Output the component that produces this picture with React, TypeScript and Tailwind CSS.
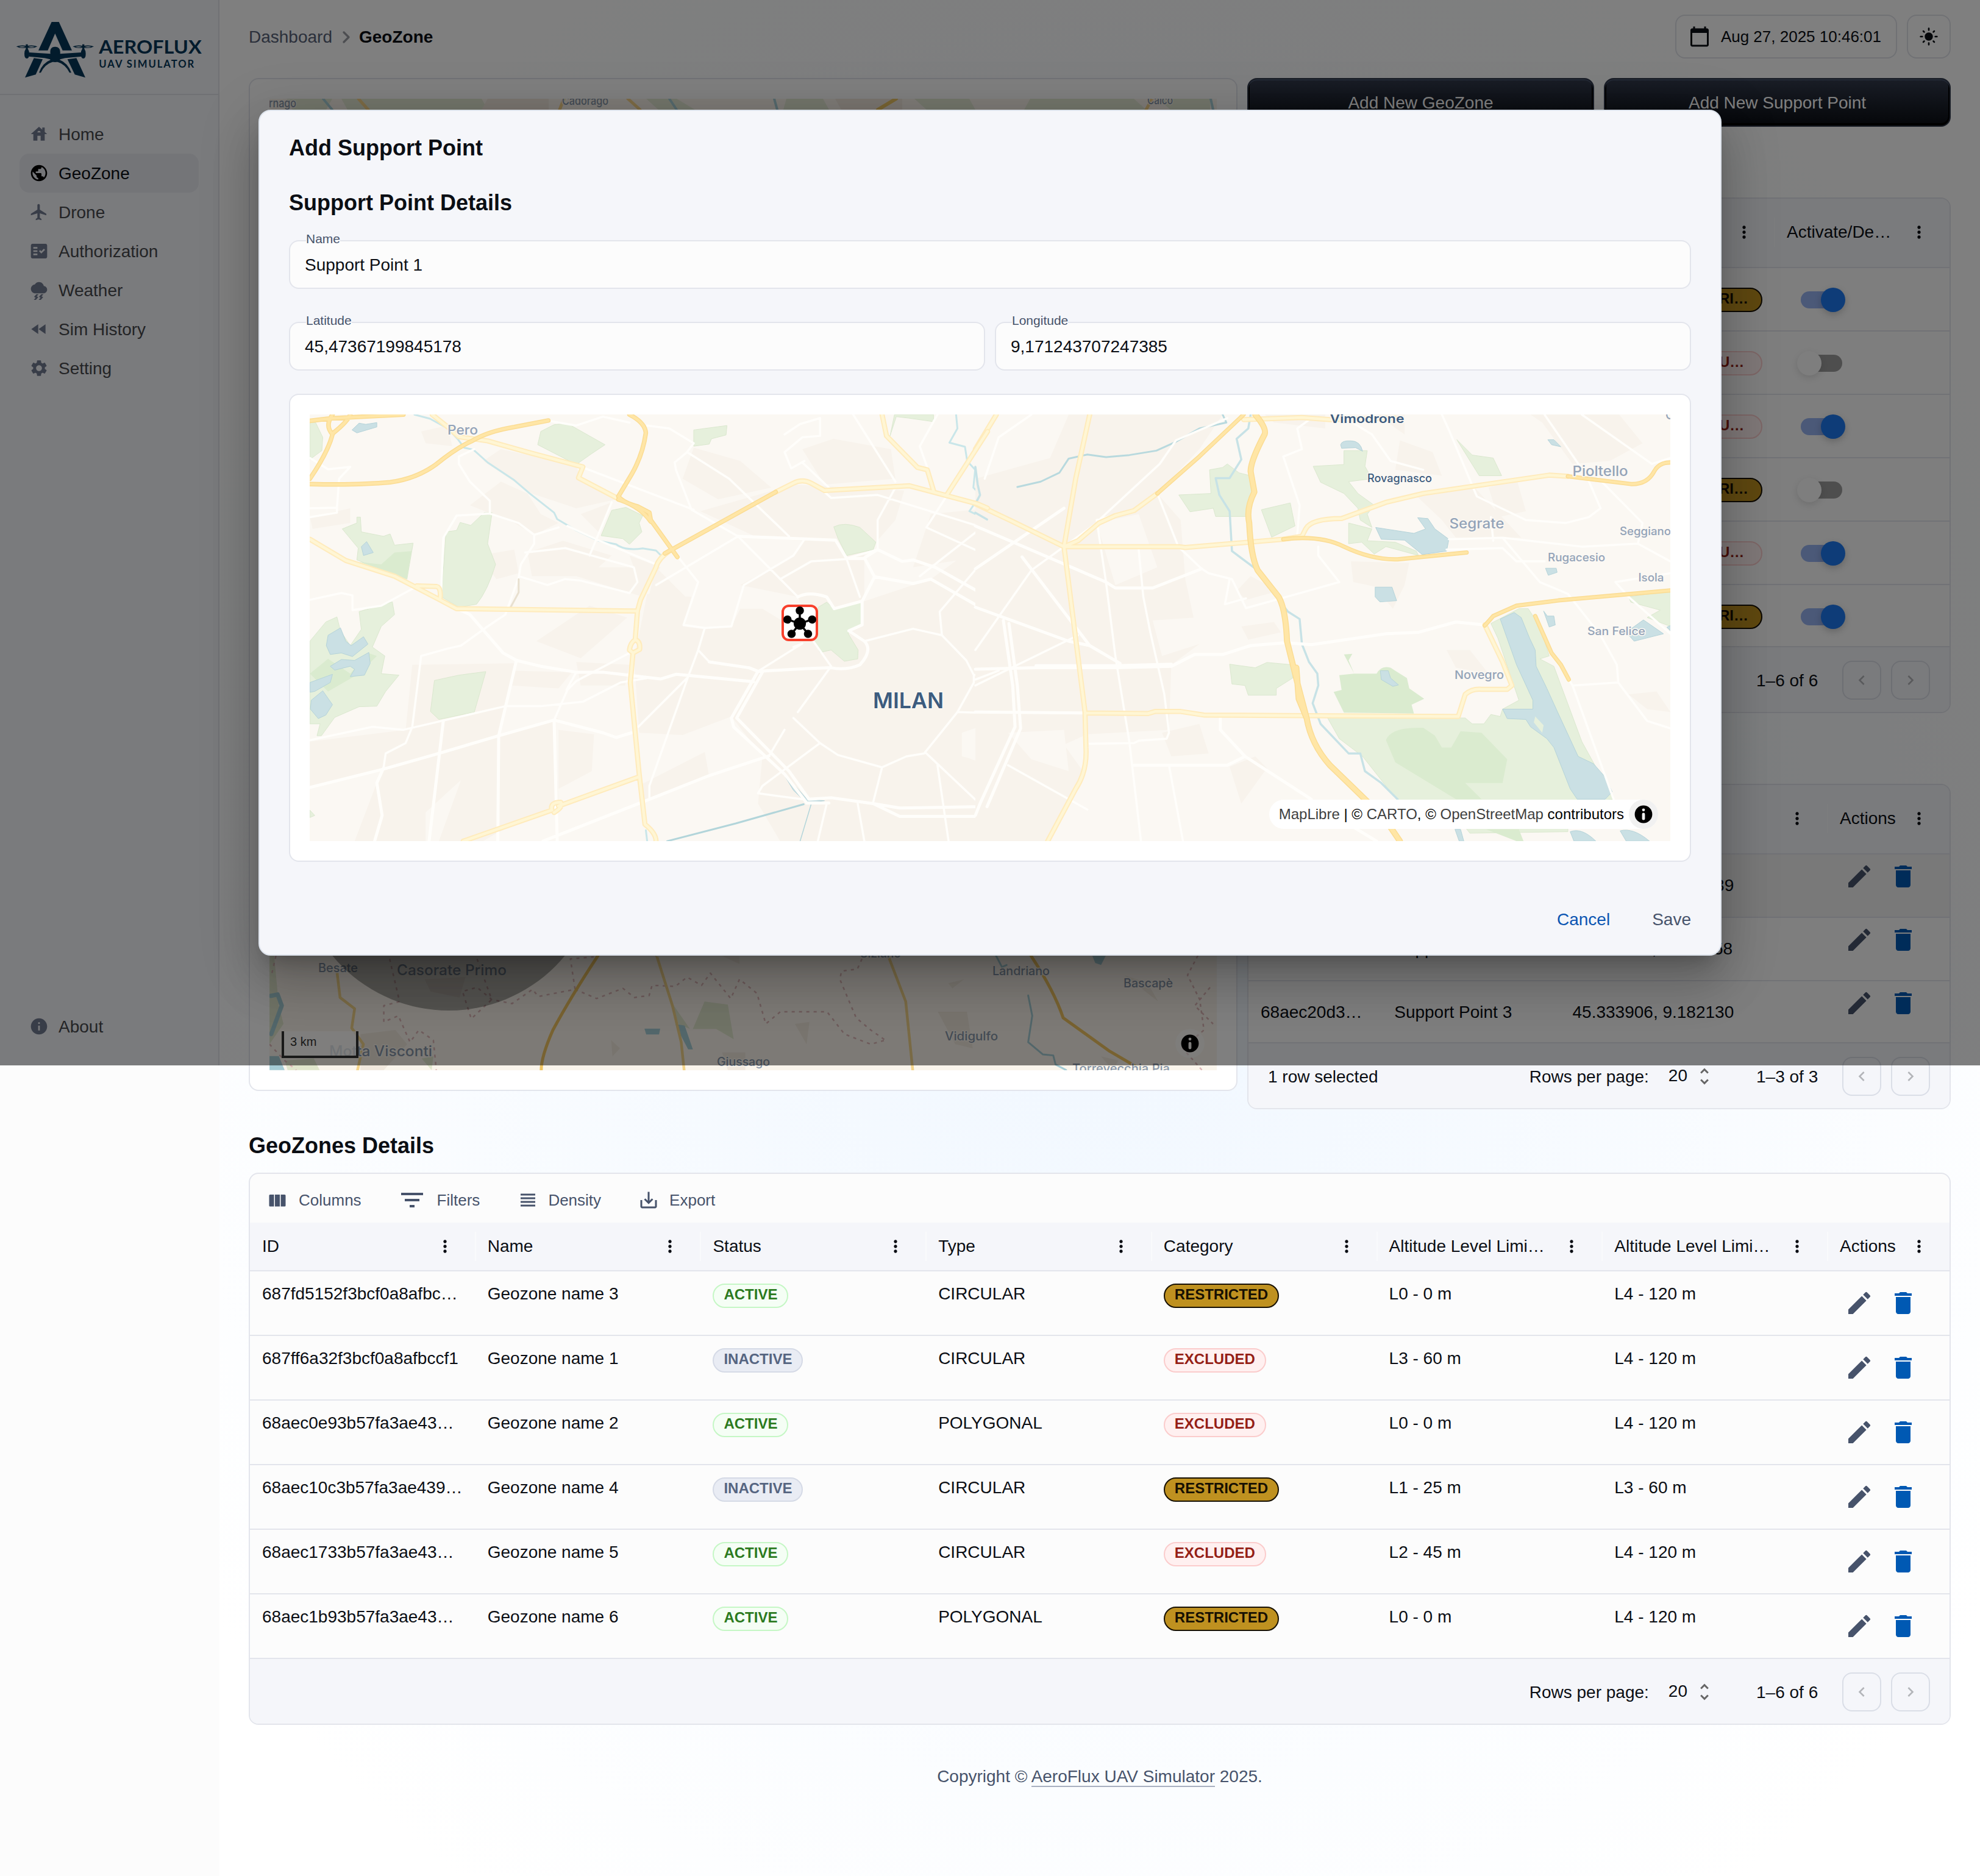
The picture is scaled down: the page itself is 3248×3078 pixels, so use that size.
import type { ComponentType, ReactNode } from "react";
import {
  MdCalendarToday,
  MdDelete,
  MdEdit,
  MdFactCheck,
  MdFastRewind,
  MdFilterList,
  MdFlight,
  MdHouse,
  MdHub,
  MdInfo,
  MdKeyboardArrowLeft,
  MdKeyboardArrowRight,
  MdLightMode,
  MdMoreVert,
  MdPublic,
  MdSaveAlt,
  MdSettings,
  MdThunderstorm,
  MdUnfoldMore,
  MdViewHeadline,
} from "react-icons/md";

type IconType = ComponentType<{ size?: number; className?: string }>;

/* ---------- Sidebar ---------- */

function Logo() {
  return (
    <svg width="350" height="120" viewBox="0 0 1050 360" fill="#053659">
      <path d="M224 48H260L324 188H278L241 105L205 188H159Z" />
      <path d="M112 198L218 205Q213 170 241 170Q269 170 266 205L372 198V218L290 226L266 232Q260 246 241 246Q222 246 216 232L190 226L112 218Z" />
      {[102, 380].map((x) => (
        <g key={x} transform={`translate(${x} 0)`}>
          <path d="M-5 158H5V180Q12 190 12 204Q12 228 0 228Q-12 228 -12 204Q-12 190 -5 180Z" />
          <path d="M-52 169Q-30 160 0 166Q30 160 52 169Q30 181 0 174Q-30 181 -52 169ZM-40 170Q-22 176 -6 171Q-22 165 -40 170ZM40 170Q22 176 6 171Q22 165 40 170Z" fillRule="evenodd" />
        </g>
      ))}
      <path d="M137 226L180 232L146 307L93 322Z" />
      <path d="M346 226L302 232L338 307L390 322Z" />
      <path d="M162 298Q178 250 220 234L232 244Q190 256 171 298Z" />
      <path d="M321 298Q304 250 263 234L250 244Q292 256 312 298Z" />
      <text x="457" y="205" fontSize="92" fontWeight="700" fontFamily="Lato, sans-serif" textLength="505" lengthAdjust="spacingAndGlyphs">AEROFLUX</text>
      <text x="457" y="272" fontSize="50" fontWeight="700" fontFamily="Lato, sans-serif" textLength="468" lengthAdjust="spacing">UAV SIMULATOR</text>
    </svg>
  );
}

function NavItem({ icon: Icon, label, active }: { icon: IconType; label: string; active?: boolean }) {
  return (
    <div className={active ? "flex h-16 items-center gap-4 rounded-2xl bg-[#e8eaf1] px-4 text-[#0b0e14]" : "flex h-16 items-center gap-4 px-4 text-[#47484d]"}>
      <Icon size={32} className={active ? "text-black" : "text-[#717a90]"} />
      <span className="pt-0.5 text-[28px] leading-none">{label}</span>
    </div>
  );
}

function Sidebar() {
  return (
    <aside className="w-[360px] shrink-0 bg-[#fcfcfc]">
      <div className="flex h-[1748px] flex-col border-r-2 border-[#e0e2e9] bg-[#f5f6fa]">
        <div className="h-[156px] border-b-2 border-[#e0e2e9] pt-5 pl-2.5">
          <Logo />
        </div>
        <nav className="flex flex-1 flex-col p-8">
          <NavItem icon={MdHouse} label="Home" />
          <NavItem icon={MdPublic} label="GeoZone" active />
          <NavItem icon={MdFlight} label="Drone" />
          <NavItem icon={MdFactCheck} label="Authorization" />
          <NavItem icon={MdThunderstorm} label="Weather" />
          <NavItem icon={MdFastRewind} label="Sim History" />
          <NavItem icon={MdSettings} label="Setting" />
          <div className="mt-auto">
            <NavItem icon={MdInfo} label="About" />
          </div>
        </nav>
      </div>
    </aside>
  );
}

/* ---------- Shared pieces ---------- */

type Tone = "active" | "inactive" | "restricted" | "excluded";

const chipTone: Record<Tone, string> = {
  active: "border-[#c5f7c5] bg-[#f5fef5] text-[#2c7a1e]",
  inactive: "border-[#d5dae6] bg-[#e9ecf4] text-[#566581]",
  restricted: "border-[#171002] bg-[#bf9120] text-[#171002]",
  excluded: "border-[#fbcccc] bg-[#fff0f0] text-[#951f16]",
};

function Chip({ tone, children, className = "" }: { tone: Tone; children: ReactNode; className?: string }) {
  return (
    <span className={`inline-flex h-10 items-center rounded-full border-2 px-4 pb-1 text-[24px] leading-none font-bold ${chipTone[tone]} ${className}`}>
      {children}
    </span>
  );
}

function HeaderCell({ children, last }: { children?: ReactNode; last?: boolean }) {
  return (
    <div className="relative flex h-full items-center justify-between pr-[34px] pl-5 text-[28px] leading-none whitespace-nowrap text-[#0b0e14]">
      <span>{children}</span>
      <MdMoreVert size={32} />
      {!last && <span className="absolute top-1/2 -right-px h-12 w-0.5 -translate-y-1/2 bg-[#f9fafc]" />}
    </div>
  );
}

function RowActions() {
  return (
    <div className="flex gap-6 pl-7">
      <MdEdit size={48} className="text-[#47536b]" />
      <MdDelete size={48} className="text-[#0059b3]" />
    </div>
  );
}

function Pagination({ range, selected }: { range: string; selected?: string }) {
  return (
    <div className="flex h-[106px] items-center bg-[#f5f6fa] px-8 pt-0.5 text-[28px] leading-none text-[#0b0e14]">
      <span className="flex-1 pt-0.5">{selected}</span>
      <span className="pt-0.5">Rows per page:</span>
      <span className="ml-8 pb-0.5">20</span>
      <MdUnfoldMore size={36} className="ml-[10px] text-[#666]" />
      <span className="ml-[67px] w-[101px] pt-0.5 whitespace-nowrap">{range}</span>
      <span className="ml-10 flex size-16 items-center justify-center rounded-2xl border-2 border-[#dadee7] text-[#b3b5b9]">
        <MdKeyboardArrowLeft size={32} />
      </span>
      <span className="ml-4 flex size-16 items-center justify-center rounded-2xl border-2 border-[#dadee7] text-[#b3b5b9]">
        <MdKeyboardArrowRight size={32} />
      </span>
    </div>
  );
}

function InfoGlyph() {
  return (
    <svg width="48" height="48" viewBox="0 0 20 20" fill="#000" fillRule="evenodd">
      <path d="M4 10a6 6 0 1 0 12 0 6 6 0 1 0-12 0m5-3a1 1 0 1 0 2 0 1 1 0 1 0-2 0m0 3a1 1 0 1 1 2 0v3a1 1 0 1 1-2 0" />
    </svg>
  );
}

interface Place {
  t: string;
  x: number;
  y: number;
  w: number;
  s: number;
  c: string;
  b?: number;
}

function Places({ items, halo }: { items: Place[]; halo: string }) {
  return (
    <g fontFamily="Inter, sans-serif" stroke={halo} strokeWidth="3" paintOrder="stroke" strokeLinejoin="round">
      {items.map((p) => (
        <text key={p.t} x={p.x} y={p.y} fontSize={p.s} fill={p.c} fontWeight={p.b ?? 500} textLength={p.w} lengthAdjust="spacingAndGlyphs">
          {p.t}
        </text>
      ))}
    </g>
  );
}

function Lines({ d, color, w, dash }: { d: string; color: string; w: number; dash?: string }) {
  return <path d={d} fill="none" stroke={color} strokeWidth={w} strokeDasharray={dash} strokeLinejoin="round" strokeLinecap={dash ? "butt" : "round"} vectorEffect="non-scaling-stroke" />;
}

/* ---------- Overview map ---------- */

const overviewPlaces: Place[] = [
  { t: "rnago", x: 441, y: 176, w: 45, s: 20, c: "#8695a8" },
  { t: "Cadorago", x: 922, y: 172, w: 76, s: 19, c: "#8695a8" },
  { t: "Calco", x: 1882, y: 171, w: 42, s: 19, c: "#8695a8" },
  { t: "Besate", x: 522, y: 1595, w: 65, s: 20, c: "#8695a8" },
  { t: "Casorate Primo", x: 651, y: 1600, w: 180, s: 24, c: "#8695a8" },
  { t: "Motta Visconti", x: 540, y: 1733, w: 169, s: 24, c: "#8695a8" },
  { t: "Giussago", x: 1176, y: 1749, w: 87, s: 20, c: "#8695a8" },
  { t: "Vidigulfo", x: 1550, y: 1707, w: 87, s: 20, c: "#8695a8" },
  { t: "Landriano", x: 1628, y: 1600, w: 94, s: 20, c: "#8695a8" },
  { t: "Bascapè", x: 1843, y: 1620, w: 81, s: 20, c: "#8695a8" },
  { t: "Casarile", x: 1043, y: 1568, w: 70, s: 19, c: "#8695a8" },
  { t: "Siziano", x: 1411, y: 1571, w: 67, s: 19, c: "#8695a8" },
  { t: "Torrevecchia Pia", x: 1759, y: 1760, w: 160, s: 20, c: "#8695a8" },
];

function OverviewMap() {
  return (
    <div className="relative h-full">
      <svg className="block" width="1554" height="1594" viewBox="442 162 1554 1594">
        <rect x="442" y="162" width="1554" height="1594" fill="#faf5ec" />
        <path fill="#e4ead5" d="M470 162H545L535 180H480ZM560 162H640L650 180H570ZM630 162H790L800 180H610ZM1060 162H1110L1140 180H1080ZM1290 162H1350L1360 180H1285ZM1500 162H1590L1600 180H1520ZM1690 162H1860L1880 180H1680ZM1900 162H1985V180H1920Z" />
        <path fill="#f2e9df" d="M800 162H900V180H790ZM1370 162H1480V180H1380Z" />
        <Lines d="M588 162L604 180M925 162L918 180M1030 162L1050 180M1880 180L1890 162" color="#f8d58a" w={5} />
        <Lines d="M1470 162L1440 180" color="#efc665" w={6} />
        <Lines d="M530 162L545 180M1098 162L1110 180M1270 162L1275 180M1986 162L1990 180" color="#a9d0d9" w={4} />
        <g transform="translate(400 1360) scale(.9566 .3333)">
          <path fill="#e0e6cc" d="M790 850L830 865L840 1035L810 985L770 985ZM735 860L765 985L745 960ZM44 625H52L60 870L68 960L44 1060ZM70 1140L120 1130L130 1187H75ZM305 1130L325 1120L322 1187Z" />
          <path fill="#f1e8dd" d="M200 1010L260 990L280 1060L240 1187H200ZM1190 900L1240 900L1250 1080L1220 1060ZM310 740L380 730L370 830L320 800ZM820 1100H860V1187H830ZM945 960L970 950L965 1060ZM630 1040L645 1080L632 1120ZM1510 720L1550 760L1568 850ZM1208 760L1235 740L1215 785ZM820 625H850V665ZM1470 1120L1500 1140L1490 1187Z" />
          <path fill="#a5ccd5" d="M687 983H714L712 1012H690ZM740 960L756 968L770 1085H762L750 1020ZM1455 625H1478L1470 670L1460 660ZM44 1118H60L70 1187H44Z" />
          <Lines d="M46 822L58 815L65 870L47 1010" color="#a5ccd5" w={7} />
          <Lines d="M1290 625L1300 680L1308 670M1345 820L1352 920L1345 1050L1370 1110L1388 1115L1392 1160L1410 1187" color="#a5ccd5" w={3} />
          <Lines
            d="M55 625L47 725M44 1060L70 1140L90 1187M250 640L267 850L240 870V950L265 920L285 1050L300 990L325 1040L330 1187M400 640L425 840L390 935L375 800L400 780L425 840L460 860L495 790L505 825L568 790L560 640L600 630M568 790L605 835L650 785L670 830L695 820L700 770L740 775L760 730L785 770L800 710L835 835L850 740L880 810L895 960L920 900L1000 900L1030 1010L1075 1060L1100 1040M1060 640L1052 690L1025 700L1022 740L1050 930L1075 990L1100 1040M1830 700L1860 780L1855 940M1850 1000L1870 1187"
            color="#dcb6b7"
            w={2.5}
            dash="5 7"
          />
          <Lines d="M708 625L735 870L750 1050L755 1187M1105 625L1135 850L1147 1187M160 710L165 830L190 885L185 980L205 1060L195 1187" color="#f3d48b" w={4.5} />
          <Lines d="M607 625Q560 830 530 990Q510 1120 510 1187M1350 625Q1390 800 1405 930L1485 1095L1540 1187" color="#f0c562" w={5} />
        </g>
        <Lines d="M1965 1568L1948 1600L1968 1640L1975 1690L1940 1720L1972 1756M1985 1620L1960 1650L1990 1680" color="#dcb6b7" w={2.5} dash="5 6" />
        <Places items={overviewPlaces} halo="#faf5ec" />
        <circle cx="736" cy="1411" r="247" fill="#000" fillOpacity=".33" />
      </svg>
      <div className="absolute bottom-5 left-5 h-11 w-[126px] border-4 border-t-0 border-[#333] bg-white/75 pt-[7px] pl-2.5 text-[20px] leading-5 text-[#333]">3 km</div>
      <div className="absolute right-5 bottom-5 rounded-full bg-white/50">
        <InfoGlyph />
      </div>
    </div>
  );
}

/* ---------- Summary tables in the right column ---------- */

const zoneToggles: { name: string; tone: Tone; label: string; on: boolean }[] = [
  { name: "Geozone name 3", tone: "restricted", label: "RESTRI…", on: true },
  { name: "Geozone name 1", tone: "excluded", label: "EXCLU…", on: false },
  { name: "Geozone name 2", tone: "excluded", label: "EXCLU…", on: true },
  { name: "Geozone name 4", tone: "restricted", label: "RESTRI…", on: false },
  { name: "Geozone name 5", tone: "excluded", label: "EXCLU…", on: true },
  { name: "Geozone name 6", tone: "restricted", label: "RESTRI…", on: true },
];

function Toggle({ on }: { on: boolean }) {
  return (
    <div className={on ? "relative ml-[23px] h-7 w-[68px] rounded-full bg-[#96b2f0]" : "relative ml-[23px] h-7 w-[68px] rounded-full bg-[#9c9c9c]"}>
      <span
        className={
          on
            ? "absolute -top-1.5 -right-[5px] size-10 rounded-full bg-[#1c78f0] shadow-[0_4px_12px_rgba(0,0,0,0.2)]"
            : "absolute -top-1.5 -left-1.5 size-10 rounded-full bg-[#fcfcfc] shadow-[0_4px_12px_rgba(0,0,0,0.12)]"
        }
      />
    </div>
  );
}

function ZoneToggleTable() {
  return (
    <section className="mt-[116px] overflow-hidden rounded-2xl border-2 border-[#e3e5ec] bg-[#fcfcfc]">
      <div className="grid h-[114px] grid-cols-[1fr_193px_287px] border-b-2 border-[#e3e5ec] bg-[#f5f6fa] pb-0.5">
        <HeaderCell>Name</HeaderCell>
        <HeaderCell>Type</HeaderCell>
        <HeaderCell last>Activate/De…</HeaderCell>
      </div>
      {zoneToggles.map((z, i) => (
        <div key={z.name} className={`grid grid-cols-[1fr_193px_287px] items-start border-b-2 border-[#e3e5ec] pt-8 text-[28px] ${i === 5 ? "h-[102px]" : "h-[104px]"}`}>
          <span className="pl-5 leading-10">{z.name}</span>
          <div className="flex px-5">
            <Chip tone={z.tone} className="w-full">{z.label}</Chip>
          </div>
          <div className="pt-1.5 pl-5">
            <Toggle on={z.on} />
          </div>
        </div>
      ))}
      <Pagination range="1–6 of 6" />
    </section>
  );
}

const supportPoints = [
  { id: "68aec1f13…", name: "Support Point 1", pos: "45.473672, 9.171239" },
  { id: "68aec2003…", name: "Support Point 2", pos: "45.402118, 9.204758" },
  { id: "68aec20d3…", name: "Support Point 3", pos: "45.333906, 9.182130" },
];

function SupportPointTable() {
  return (
    <section className="mt-[116px] overflow-hidden rounded-2xl border-2 border-[#e3e5ec] bg-[#fcfcfc]">
      <div className="grid h-[114px] grid-cols-[1.5fr_2fr_3fr_200px] border-b-2 border-[#e3e5ec] bg-[#f5f6fa] pb-0.5">
        <HeaderCell>ID</HeaderCell>
        <HeaderCell>Name</HeaderCell>
        <HeaderCell>Position</HeaderCell>
        <HeaderCell last>Actions</HeaderCell>
      </div>
      {supportPoints.map((p, i) => (
        <div
          key={p.id}
          className={`grid grid-cols-[1.5fr_2fr_3fr_200px] border-b-2 border-[#e3e5ec] pt-3 text-[28px] leading-[78px] whitespace-nowrap text-[#0b0e14] ${i === 0 ? "bg-[#f2f2f3]" : ""} ${i === 2 ? "h-[102px]" : "h-[104px]"}`}
        >
          <span className="pl-5">{p.id}</span>
          <span className="pl-5">{p.name}</span>
          <span className="pl-5">{p.pos}</span>
          <RowActions />
        </div>
      ))}
      <Pagination range="1–3 of 3" selected="1 row selected" />
    </section>
  );
}

/* ---------- GeoZones details table ---------- */

const zones: { id: string; name: string; on: boolean; type: string; restricted: boolean; low: string; high: string }[] = [
  { id: "687fd5152f3bcf0a8afbc…", name: "Geozone name 3", on: true, type: "CIRCULAR", restricted: true, low: "L0 - 0 m", high: "L4 - 120 m" },
  { id: "687ff6a32f3bcf0a8afbccf1", name: "Geozone name 1", on: false, type: "CIRCULAR", restricted: false, low: "L3 - 60 m", high: "L4 - 120 m" },
  { id: "68aec0e93b57fa3ae43…", name: "Geozone name 2", on: true, type: "POLYGONAL", restricted: false, low: "L0 - 0 m", high: "L4 - 120 m" },
  { id: "68aec10c3b57fa3ae439…", name: "Geozone name 4", on: false, type: "CIRCULAR", restricted: true, low: "L1 - 25 m", high: "L3 - 60 m" },
  { id: "68aec1733b57fa3ae43…", name: "Geozone name 5", on: true, type: "CIRCULAR", restricted: false, low: "L2 - 45 m", high: "L4 - 120 m" },
  { id: "68aec1b93b57fa3ae43…", name: "Geozone name 6", on: true, type: "POLYGONAL", restricted: true, low: "L0 - 0 m", high: "L4 - 120 m" },
];

function ColumnsIcon() {
  return (
    <svg width="36" height="36" viewBox="0 0 24 24" fill="currentColor">
      <path d="M14.67 6v13H9.33V6zm1 13H20q1 0 1-1V7q0-1-1-1h-4.33zm-7.34 0V6H4Q3 6 3 7v11q0 1 1 1z" />
    </svg>
  );
}

function ZoneDetails() {
  return (
    <section>
      <h2 className="mt-9 h-12 text-[36px] leading-12 font-bold text-[#0b0e14]">GeoZones Details</h2>
      <div className="mt-5 overflow-hidden rounded-2xl border-2 border-[#e3e5ec] bg-[#fcfcfc]">
        <div className="flex h-20 items-center pt-1.5 pl-[27px] text-[26px] leading-none text-[#47536b]">
          <ColumnsIcon />
          <span className="ml-[17px]">Columns</span>
          <MdFilterList size={48} className="ml-[59px]" />
          <span className="ml-[17px]">Filters</span>
          <MdViewHeadline size={36} className="ml-[61px]" />
          <span className="ml-[15px]">Density</span>
          <MdSaveAlt size={36} className="ml-[60px]" />
          <span className="ml-4">Export</span>
        </div>
        <div className="grid h-20 grid-cols-[repeat(7,1fr)_200px] border-b-2 border-[#e3e5ec] bg-[#f5f6fa]">
          {["ID", "Name", "Status", "Type", "Category", "Altitude Level Limi…", "Altitude Level Limi…", "Actions"].map((h, i) => (
            <HeaderCell key={i} last={i === 7}>{h}</HeaderCell>
          ))}
        </div>
        {zones.map((z) => (
          <div key={z.id} className="grid h-[106px] grid-cols-[repeat(7,1fr)_200px] items-start border-b-2 border-[#e3e5ec] text-[28px] leading-[40px] whitespace-nowrap text-[#0b0e14]">
            <span className="pt-[17px] pl-5">{z.id}</span>
            <span className="pt-[17px] pl-5">{z.name}</span>
            <div className="flex pt-5 pl-5">
              <Chip tone={z.on ? "active" : "inactive"}>{z.on ? "ACTIVE" : "INACTIVE"}</Chip>
            </div>
            <span className="pt-[17px] pl-5">{z.type}</span>
            <div className="flex pt-5 pl-5">
              <Chip tone={z.restricted ? "restricted" : "excluded"}>{z.restricted ? "RESTRICTED" : "EXCLUDED"}</Chip>
            </div>
            <span className="pt-[17px] pl-5">{z.low}</span>
            <span className="pt-[17px] pl-5">{z.high}</span>
            <div className="pt-7">
              <RowActions />
            </div>
          </div>
        ))}
        <Pagination range="1–6 of 6" />
      </div>
    </section>
  );
}

/* ---------- City map in the dialog ---------- */

const cityPlaces: Place[] = [
  { t: "Pero", x: 734, y: 712.5, w: 50, s: 22, c: "#93a3b8" },
  { t: "Vimodrone", x: 2181.5, y: 694, w: 122, s: 20, c: "#3d5c7f", b: 600 },
  { t: "Rovagnasco", x: 2243, y: 790.5, w: 106, s: 18, c: "#3d5c7f" },
  { t: "Pioltello", x: 2579.5, y: 781, w: 91, s: 23, c: "#93a3b8" },
  { t: "Segrate", x: 2377.5, y: 867, w: 90, s: 23, c: "#93a3b8" },
  { t: "Seggiano", x: 2657, y: 877.5, w: 84, s: 18, c: "#93a3b8" },
  { t: "Rugacesio", x: 2539, y: 920.5, w: 94, s: 18, c: "#93a3b8" },
  { t: "Isola", x: 2687.5, y: 954, w: 42, s: 18, c: "#93a3b8" },
  { t: "San Felice", x: 2604, y: 1042, w: 95, s: 18, c: "#93a3b8" },
  { t: "Novegro", x: 2386, y: 1113.5, w: 81, s: 19, c: "#93a3b8" },
  { t: "C", x: 2732, y: 688, w: 14, s: 22, c: "#93a3b8" },
  { t: "MILAN", x: 1432, y: 1161.5, w: 116, s: 36, c: "#3d5c7f", b: 600 },
];

const westLocal =
  "M39 1345L200 1285L330 1230L465 1170L590 1117L700 1160L730 1176L765 1160M372 740L400 760L475 890L505 915L560 935L640 955H700L830 978L865 962L1040 987M505 915L465 1170L463 1527M590 1117L597 1527M340 1120L308 1527M205 1280L190 1330L202 1440L185 1527M565 1527L780 1400L940 1305L1075 1238M1050 952L990 1110L995 1140L1110 1300L1160 1398H1210M1060 955L1002 1110L1120 1290L1165 1385L1215 1380L1310 1400L1370 1415L1550 1410L1568 1380M1310 1400L1370 1443H1550L1568 1420M940 920L1030 940L1050 952L1160 943L1215 940Q1250 950 1280 930Q1310 880 1290 850L1255 815L1285 795V715L1313 632L1290 568L1320 540L1375 580L1400 575L1450 600L1568 700M1140 700Q1165 680 1205 700L1222 740L1283 715M1313 632L1400 655L1440 640L1568 750M1005 495L1225 508L1250 570H1290";
const westMinor =
  "M39 1185L180 1140L250 1150L480 1070H560L655 1055L740 990L800 975M205 1280L210 1230L255 1195L270 1140L290 900L350 875L380 865L440 800L480 760L510 635L515 590L545 520V490L510 450L445 418V375L400 310L375 250V225L410 200M760 890L640 985L620 1015L590 1117M640 955L618 1015M890 975L780 1140M930 805L915 880L890 980L805 1340V1380M915 880L940 920M1430 1230L1550 1400M1425 1230L1500 1090L1537 990V965L1520 915L1465 830L1460 750L1568 560M1425 1230L1385 1240L1330 1277L1230 1235L1190 1195L1130 1110M1330 1277L1310 1395M1190 1195L1060 1340L1050 1365L1150 1385M1500 1090L1568 1093M1537 965L1568 960M1290 850L1400 808L1465 830M1050 952L1150 858L1130 870M1175 850L1215 935L1140 1090M1005 495L820 660M1005 495L900 405L865 270L862 245L890 210L905 180L850 130L800 120M905 405L660 265M890 210L985 300L1120 495M720 380L670 560M525 550L615 535L770 600L778 650L760 687L650 645L615 640L575 660L515 632M870 565L915 650L882 795L930 805L990 800L1018 660L1130 560L1155 505M1005 495L1140 700M1100 640L1170 580L1250 572L1280 700M1265 83L1360 310M1455 83L1415 190L1432 262M1200 345L1215 365L1320 355L1568 470M1475 360L1430 465L1568 560M1415 630L1568 450M1320 540V440L1360 330M600 465L545 490M685 505L620 460M685 505L820 590M39 400L100 398L105 300L130 260L80 268L39 230M39 430L100 415V398M39 710L110 687L135 695V745L200 730L280 665M575 103L640 120L700 90L760 110M1110 150L1145 115L1190 95V155L1150 160L1110 210L1125 265L1155 240M370 425L445 418M370 425L340 500L335 690M1150 245L1210 330M1455 1270L1480 1527M1275 1400L1290 1527M1205 1400L1185 1527M200 1285L39 1345M1075 1238L1110 1150M1320 540L1250 570";
const eastLocal =
  "M0 460L280 650L300 670H380L485 605M100 565L245 865L310 925M0 735L200 850L245 865M0 605L190 400M60 780L80 1000L85 1140L10 1400L0 1440M72 790L90 1000L97 1145L25 1410M130 940H300L420 935L470 895L530 895L590 865L665 855L720 862L880 825L950 820L1030 785L1090 795M130 933H300L420 928M0 945L130 940M0 1090L235 1093M340 1270H540L578 1240L525 1150V1110M578 1240L720 1385M860 1527L780 1450L730 1395";
const eastMinor =
  "M280 650L260 440L295 425M265 440L395 250L430 170L540 95M280 650L300 900L330 1190L355 1527M245 1197L340 1195L350 1187L410 1180L415 1160L405 1030L375 820L360 700L350 540M415 1270L445 1527M390 350L410 430L435 530L485 605M660 225L700 200L690 130L720 95M660 225L695 390L690 490M735 530V560L780 650L690 690L580 738L550 640L500 620L485 605M545 640L535 725L580 705M1015 505L1130 500L1300 530L1420 520L1490 580M1010 540L1130 535L1160 580H1220M1220 83L1310 290L1340 400L1315 430L1265 450L1225 445L1180 440L1075 360L1015 135L1000 83M1130 500L1210 650L1270 690L1340 830L1375 930L1378 990L1280 1000L1272 980M1280 1000L1368 1385M1378 990L1440 1120L1490 1145M1400 700L1490 825M1372 650L1490 620M1372 650L1400 700M0 980L50 950M120 83L50 160L20 300M0 880L120 610L260 450M70 1270L240 1420M780 83L850 150L890 240L960 270M1300 83L1450 250L1490 230M1105 430L1110 510M1330 290L1430 450L1420 520M220 830L0 1000";

function CityMap() {
  return (
    <div className="relative h-full">
      <svg className="block" width="2232" height="700" viewBox="508 680 2232 700">
        <rect x="508" y="680" width="2232" height="700" fill="#fbf8f3" />
        <g transform="translate(480 640) scale(.72704 .48469)">
          <path
            fill="#f8f3ec"
            d="M820 600L900 720L880 800L930 810L990 800L1010 740L1060 740L1180 850L1140 700L1010 660L1130 560L1150 510L1050 500L920 410L1060 350L1130 320L1380 340L1360 440L1290 560L1290 715L1440 640L1568 500V1130L1510 1160L1510 1240L1568 1260V1527H1100L1050 1400L1060 1240L990 1105L880 1168L782 1160L770 900ZM470 200L640 255L650 300L730 370L640 400L540 350L430 240ZM400 390L500 450L545 490L600 450L560 420L530 350L470 310ZM530 550L610 510L720 560L690 600L770 600L760 560L830 600L790 700L640 630H540ZM270 930L500 925L465 1170L590 1115L600 1400L460 1500L430 1527H140L200 1290L39 1345V1190L255 1150ZM500 950L630 955L600 1010L495 1000ZM550 850L670 730L755 770L650 908ZM640 920L760 930L750 1000L650 1000ZM520 1160L600 1110L570 1180ZM780 1340L930 1225L940 1310L790 1390ZM600 1150L680 1165L675 1290L600 1350ZM1150 200L1220 165L1350 200L1360 300L1200 320ZM905 195L1010 240L1080 330L960 370L880 300ZM1420 200L1480 110L1530 180L1500 290L1440 240ZM560 290L640 300L650 370L570 360ZM290 140L350 120L360 190L300 180ZM39 430L130 400V450L45 470ZM800 690L900 700L880 800L780 840ZM420 560L500 540L510 620L460 640ZM1440 420L1568 400V560L1400 600ZM1240 1527V1420L1300 1400L1310 1527ZM650 420L720 380L690 480Z"
          />
          <path fill="#fbf8f3" d="M1350 83H1568V140L1475 350L1430 320L1400 230L1345 170ZM685 1270L720 1265L715 1310L690 1325ZM1510 1170L1568 1150V1270L1515 1240ZM300 1430L380 1320L330 1527H300Z" />
          <path
            fill="#e6f0dc"
            stroke="#dbe8cf"
            strokeWidth="1"
            vectorEffect="non-scaling-stroke"
            d="M560 140L590 117L620 113L705 185L675 215L640 252L553 185ZM905 135L980 120L978 152L945 165L940 183L905 190ZM1358 83H1446V107L1390 95L1362 90L1348 155ZM39 108L52 110L68 160L66 205L39 235ZM720 407L752 397L790 425L782 450L788 480L760 522L745 503L696 493ZM112 470L145 450L145 430L153 430L155 480L205 495L220 487L230 525L272 518L258 640L145 575L148 535ZM346 480L370 475L378 448L402 458L432 415H450L440 520L458 590Q440 680 415 725L375 735L336 700ZM1221 463Q1245 445 1280 465L1316 515L1310 540L1250 560L1230 500ZM1283 715V795L1253 823L1276 880L1275 910L1245 918L1215 880L1190 888L1176 850L1186 735L1205 718L1222 740ZM39 850L75 785L100 768L108 815L130 865L155 810L150 750L225 717L230 760L200 800L180 870L208 900L200 960L240 965L210 1020L190 1070L150 1072L95 1108L65 1170H55L62 1130L39 1130ZM320 983L375 965L436 953L410 1090L330 1115L311 1088ZM39 1422L50 1440L39 1447Z"
          />
          <path fill="#daebcf" d="M230 550L268 545L258 640L150 582L200 590ZM39 960L80 910L130 960L170 890L190 900L150 960L80 1020Z" />
          <path
            fill="#cae0e4"
            stroke="#b5d3d9"
            strokeWidth="1"
            vectorEffect="non-scaling-stroke"
            d="M80 830L108 805L120 850L132 865L160 835L170 860L135 902L110 890L85 895L76 865ZM85 935L110 912L140 915L172 888L175 925L162 965L130 970L140 945L130 935L95 948ZM39 990L90 962L85 990L50 1020L39 1023ZM42 1050L68 1018L90 1065L75 1100L58 1112L40 1080ZM134 135L150 112L165 116L190 110V125L145 145ZM155 530L167 513L182 550L160 560ZM1112 1310L1140 1350L1160 1384L1200 1390L1160 1398L1130 1355Z"
          />
          <Lines d="M275 83L310 97L350 130L372 165L387 195L408 202L440 245L500 305L535 350L590 415L597 437L640 475L690 510L730 522Q750 545 790 536L820 543L830 558M1497 83L1500 130L1482 178L1517 192L1522 240L1540 270L1536 330L1552 355L1527 410L1568 440M797 1490L800 1527" color="#c9e6e9" w={3} />
          <Lines d="M845 1527L1000 1467L1153 1402" color="#b2d5da" w={3} />
          <Lines d="M1145 1527L1170 1402" color="#b2d5da" w={1.5} />
          <Lines d={westMinor} color="#fffefb" w={3.5} />
          <Lines d={westLocal} color="#fffefb" w={5} />
          <Lines d="M510 640V685L492 735" color="#e8e0d0" w={3} />
        </g>
        <g transform="translate(1600 640) scale(.76531 .48469)">
          <path
            fill="#f8f3ec"
            d="M0 83H530L480 200L390 350L440 440L450 640L480 860L420 930L415 1150L240 1165L190 1200L235 1300L150 1527H0ZM1190 83H1380L1430 180L1360 240L1280 250L1215 110ZM910 170L980 210L1000 290L900 270ZM940 350L1070 330L1170 500L1030 500L1000 440ZM1100 330L1160 300L1180 410L1120 430ZM805 580L930 585L920 660L895 740L855 665L810 650ZM545 1275L600 1240L625 1280L570 1400ZM570 800L640 785L655 820L585 845ZM1010 880L1060 880L1100 960L1030 940ZM560 680L590 630L650 680L580 710ZM1400 1030L1460 1020L1490 1090L1440 1080ZM620 83H750V130L640 110ZM860 83H920V150ZM400 1160L480 1130L500 1230L420 1240Z"
          />
          <path fill="#fbf8f3" d="M0 83H200L160 230L0 300ZM260 450L350 420L390 600L300 660ZM70 1160L190 1150L200 1290L120 1250ZM380 780L470 770L480 860L400 900Z" />
          <path
            fill="#e6f0dc"
            stroke="#dbe8cf"
            strokeWidth="1"
            vectorEffect="non-scaling-stroke"
            d="M502 270L530 262L540 250L565 280L590 290L600 340L580 428H515L510 400L460 412L436 355L505 350ZM613 405L675 382L685 460L635 498ZM724 258L790 252V205H840L835 258L850 300L800 310L820 350L855 390L840 420L850 465L825 440L820 400L790 350L740 312ZM800 450L850 470L840 510L900 515L945 545L950 560L880 530L855 555L828 515L800 520ZM1032 168L1065 220L1110 230L1128 290H1080ZM1400 700L1490 680V800L1440 770L1468 745L1405 718ZM545 928L600 940L625 922L680 930V975L645 1010V1033H585L578 1000L550 995ZM755 1110H1050L1065 1130L1090 1130L1105 1098L1125 1105L1130 1080L1165 1050L1120 840L1105 790L1165 740H1185L1210 800L1230 900L1210 910L1240 935L1300 1190L1368 1385L1270 1400V1495L1060 1500L1050 1480L905 1390L830 1240L780 1180Z"
          />
          <path
            fill="#daebcf"
            d="M790 895L808 893L800 915L812 960L860 960Q870 930 890 940L925 975L930 1010L962 1045L935 1065L940 1095L790 1092L768 1022L785 1015L780 965L812 960ZM880 1185Q890 1140 960 1143L985 1170L1000 1210L1020 1210L1040 1155L1085 1160L1140 1250L1130 1330L1050 1330L1085 1385H1030L900 1260ZM1095 1487H1165L1175 1527H1160Z"
          />
          <path
            fill="#cae0e4"
            stroke="#b5d3d9"
            strokeWidth="1"
            vectorEffect="non-scaling-stroke"
            d="M1125 775L1155 753L1170 770L1188 840L1200 880L1202 935L1225 1010L1248 1090L1292 1240L1325 1265L1350 1310L1365 1360L1350 1385H1290L1275 1350L1240 1210L1225 1180L1190 1140L1180 1115L1140 1112L1130 1080L1195 1080V1050L1160 930ZM858 465L940 485L965 470L948 432L970 435L985 470L1015 505L1010 545L958 557L920 508L870 505ZM857 667H893L903 713L867 717L857 700ZM783 185Q785 170 805 172Q825 172 830 207L815 195L785 197ZM1227 168H1240L1255 192L1235 185ZM1222 603H1245L1247 617L1228 627ZM1395 820L1432 778L1475 825L1412 850ZM1482 803L1490 797V815ZM1218 748L1226 765L1240 765L1243 795L1230 802ZM868 950L885 950L890 975L907 998L895 1003L870 980ZM1275 1495Q1300 1480 1330 1527H1283ZM1382 1492Q1410 1480 1445 1527H1395ZM1028 1487H1040L1047 1527H1037Z"
          />
          <path fill="#e6f0dc" d="M1200 1105L1218 1135L1215 1160L1197 1125Z" />
          <Lines d="M0 260L5 320L10 355L0 385M0 415L25 438M590 83L585 130L560 165L570 235L545 298H515L523 355L545 410L550 545L605 610L640 690L670 750L695 775L700 860L715 920L733 960L735 1000L723 1060L740 1130L800 1230H825L835 1290L870 1330L905 1385" color="#c7e2e6" w={3.5} />
          <Lines d="M530 83L538 110L480 130L430 175L388 205L330 220L280 227L240 218L200 232L180 280L140 310L90 328" color="#b8d9de" w={3} />
          <Lines d={eastMinor} color="#fffefb" w={3.5} />
          <Lines d={eastLocal} color="#fffefb" w={5} />
          {[
            { c: "#ffebbc", w: 8.5 },
            { c: "#fff6d4", w: 4.5 },
          ].map((s) => (
            <Lines
              key={s.w}
              d="M0 385L80 445L190 530L220 510L265 450L300 425L340 408L390 350M190 530H435L450 533L660 505L700 495L708 470Q720 435 785 435L880 380L960 350L1230 288L1270 292M245 83L215 300L190 530L235 1090L237 1210Q240 1290 215 1350L155 1527M45 83L0 200M235 1093L370 1095L385 1088H440L490 1100L710 1102L1035 1105L1050 1030Q1065 1010 1085 1013H1140L1150 1000L1130 920L1092 795M575 100L700 93L760 100L900 95"
              color={s.c}
              w={s.w}
            />
          ))}
          {[
            { c: "#fbdc93", w: 9 },
            { c: "#ffe6a6", w: 6 },
          ].map((s) => (
            <g key={s.w}>
              <Lines d="M600 83Q625 130 620 150Q590 240 590 275L598 345Q580 400 587 450Q590 560 605 610L650 700Q665 740 668 850L690 990L710 1110Q720 1200 760 1270L845 1400L890 1480L910 1527M688 940L693 1045L710 1110" color={s.c} w={s.w + 1} />
              <Lines d="M575 83L480 225L390 350M660 505Q740 490 790 530Q850 575 905 573L1053 550M1490 678L1250 712L1160 730L1110 765L1092 797M1490 245Q1465 245 1455 275Q1440 320 1405 318L1270 292M1200 765L1235 890L1255 930L1272 980" color={s.c} w={s.w - 2} />
            </g>
          ))}
        </g>
        <g transform="translate(480 640) scale(.72704 .48469)">
          {[
            { c: "#ffebbc", w: 8.5 },
            { c: "#fff6d4", w: 4.5 },
          ].map((s) => (
            <Lines
              key={s.w}
              d="M1090 345L1130 315Q1150 300 1170 315L1200 340L1392 324L1475 357L1545 385L1568 400M315 83L350 125L375 158L440 172L530 210L655 260L645 297L735 368M850 545Q825 570 820 600L785 710L778 748L773 845Q762 855 760 880L768 890L762 990L782 1300L795 1470Q820 1500 820 1527M773 845Q785 850 783 878L768 890M39 505L120 577L230 630L330 708L370 740L778 748M280 663L325 665Q335 668 333 705M385 1527L585 1422Q580 1395 605 1395Q612 1410 590 1430M600 1408L780 1310M1330 83L1340 155L1410 262L1432 270L1447 345M1475 357L1568 140"
              color={s.c}
              w={s.w}
            />
          ))}
          {[
            { c: "#fbdc93", w: 7.5 },
            { c: "#ffe6a6", w: 4.5 },
          ].map((s) => (
            <Lines
              key={s.w}
              d="M39 104L85 96L160 90L250 83M39 318Q150 322 220 312Q280 300 325 250Q370 195 405 172Q440 140 500 125L577 103M90 83Q72 120 90 150Q80 210 39 300M130 83Q125 105 92 145M760 83Q795 110 797 145Q790 220 765 285L735 360Q745 380 780 395L805 415L808 440L868 565M735 370Q785 395 808 445M840 553L1090 345"
              color={s.c}
              w={s.w}
            />
          ))}
        </g>
        <Places items={cityPlaces} halo="#fbf8f3" />
      </svg>
      <div className="absolute top-[312px] left-[774px] flex size-[60px] items-center justify-center rounded-xl border-4 border-[#f8402c] bg-white text-black">
        <MdHub size={54} className="shrink-0" />
      </div>
      <div className="absolute right-5 bottom-5 flex h-12 items-center rounded-full bg-white pl-4 text-[24px] leading-none whitespace-nowrap text-black">
        <span>
          <span className="text-[#404040]">MapLibre</span> | © <span className="text-[#404040]">CARTO</span>, © <span className="text-[#404040]">OpenStreetMap</span> contributors
        </span>
        <span className="ml-2 size-12 rounded-full bg-[#f1f1f1]">
          <InfoGlyph />
        </span>
      </div>
    </div>
  );
}

/* ---------- Dialog ---------- */

function Field({ label, value }: { label: string; value: string }) {
  return (
    <div className="relative flex h-20 flex-1 items-center rounded-2xl border-2 border-[#e3e5ec] bg-[#fcfcfc] pt-0.5 pl-6 text-[28px] leading-none text-[#0b0e14]">
      {value}
      <span className="absolute -top-4 left-[26px] text-[21px] leading-6 text-[#47536b]">
        <span className="absolute inset-x-0 top-3.5 h-0.5 bg-[#f8f9fb]" />
        <span className="relative">{label}</span>
      </span>
    </div>
  );
}

function SupportPointDialog() {
  return (
    <div className="flex h-[1388px] w-[2400px] flex-col rounded-[20px] border-2 border-[#dde3ec] bg-[#f5f6fa] px-12 pt-[34px] text-[#0b0e14] shadow-[0_22px_30px_-14px_rgba(0,0,0,0.2),0_48px_76px_6px_rgba(0,0,0,0.14),0_18px_92px_16px_rgba(0,0,0,0.12)]">
      <h1 className="text-[36px] leading-[54px] font-bold">Add Support Point</h1>
      <h2 className="mt-9 text-[36px] leading-[54px] font-bold">Support Point Details</h2>
      <div className="mt-[34px] flex">
        <Field label="Name" value="Support Point 1" />
      </div>
      <div className="mt-[54px] flex gap-4">
        <Field label="Latitude" value="45,47367199845178" />
        <Field label="Longitude" value="9,171243707247385" />
      </div>
      <div className="mt-[38px] h-[768px] rounded-2xl border-2 border-[#e3e5ec] bg-white p-8">
        <CityMap />
      </div>
      <div className="mt-[75px] flex justify-end gap-[69px] text-[28px] leading-[40px]">
        <span className="text-[#0b55b2]">Cancel</span>
        <span className="text-[#47536b]">Save</span>
      </div>
    </div>
  );
}

/* ---------- Page ---------- */

function TopBar() {
  return (
    <header className="flex h-32 items-start pt-6">
      <div className="flex h-[72px] flex-1 items-center pt-0.5 text-[28px] leading-none">
        <span className="text-[#566076]">Dashboard</span>
        <svg className="mr-3 ml-3.5" width="18" height="22" viewBox="0 0 18 22" fill="none" stroke="#9a9ca3" strokeWidth="3.4" strokeLinecap="round" strokeLinejoin="round">
          <path d="M5 3L13 11L5 19" />
        </svg>
        <span className="font-bold text-[#0b0e14]">GeoZone</span>
      </div>
      <div className="flex h-[72px] items-center gap-[17px] rounded-2xl border-2 border-[#e0e2e9] pr-6 pl-5 text-[26px] leading-none text-[#0b0e14]">
        <MdCalendarToday size={36} />
        <span>Aug 27, 2025 10:46:01</span>
      </div>
      <div className="ml-4 flex size-[72px] items-center justify-center rounded-2xl border-2 border-[#e0e2e9] text-[#0b0e14]">
        <MdLightMode size={32} />
      </div>
    </header>
  );
}

function PrimaryButton({ children }: { children: ReactNode }) {
  return (
    <button className="h-20 flex-1 rounded-2xl border-2 border-[#333b4d] bg-linear-to-b from-[#333b4d] to-[#0b0e14] pt-0.5 text-[28px] leading-none text-white shadow-[inset_0_2px_0_#47536b,inset_0_-2px_0_2px_#000]">
      {children}
    </button>
  );
}

export default function App() {
  return (
    <div className="relative flex h-[3078px] w-[3248px] overflow-hidden bg-[#fcfcfc] font-['Liberation_Sans',Arial,sans-serif]">
      <Sidebar />
      <main className="flex-1 bg-[radial-gradient(ellipse_62%_62%_at_50%_50%,#f0f7ff,#ffffff)] px-12">
        <TopBar />
        <div className="flex items-start gap-4">
          <div className="h-[1662px] w-[1622px] shrink-0 rounded-2xl border-2 border-[#e3e5ec] bg-white p-8">
            <OverviewMap />
          </div>
          <div className="flex-1">
            <div className="flex gap-4">
              <PrimaryButton>Add New GeoZone</PrimaryButton>
              <PrimaryButton>Add New Support Point</PrimaryButton>
            </div>
            <ZoneToggleTable />
            <SupportPointTable />
          </div>
        </div>
        <ZoneDetails />
        <footer className="mt-[65px] text-center text-[28px] leading-10 text-[#47536b]">
          Copyright ©{" "}
          <a className="border-b-2 border-[#a9b0c0] text-[#47536b]">AeroFlux UAV Simulator</a> 2025.
        </footer>
      </main>
      <div className="absolute inset-x-0 top-0 flex h-[1748px] items-center justify-center overflow-hidden bg-black/50">
        <SupportPointDialog />
      </div>
    </div>
  );
}
